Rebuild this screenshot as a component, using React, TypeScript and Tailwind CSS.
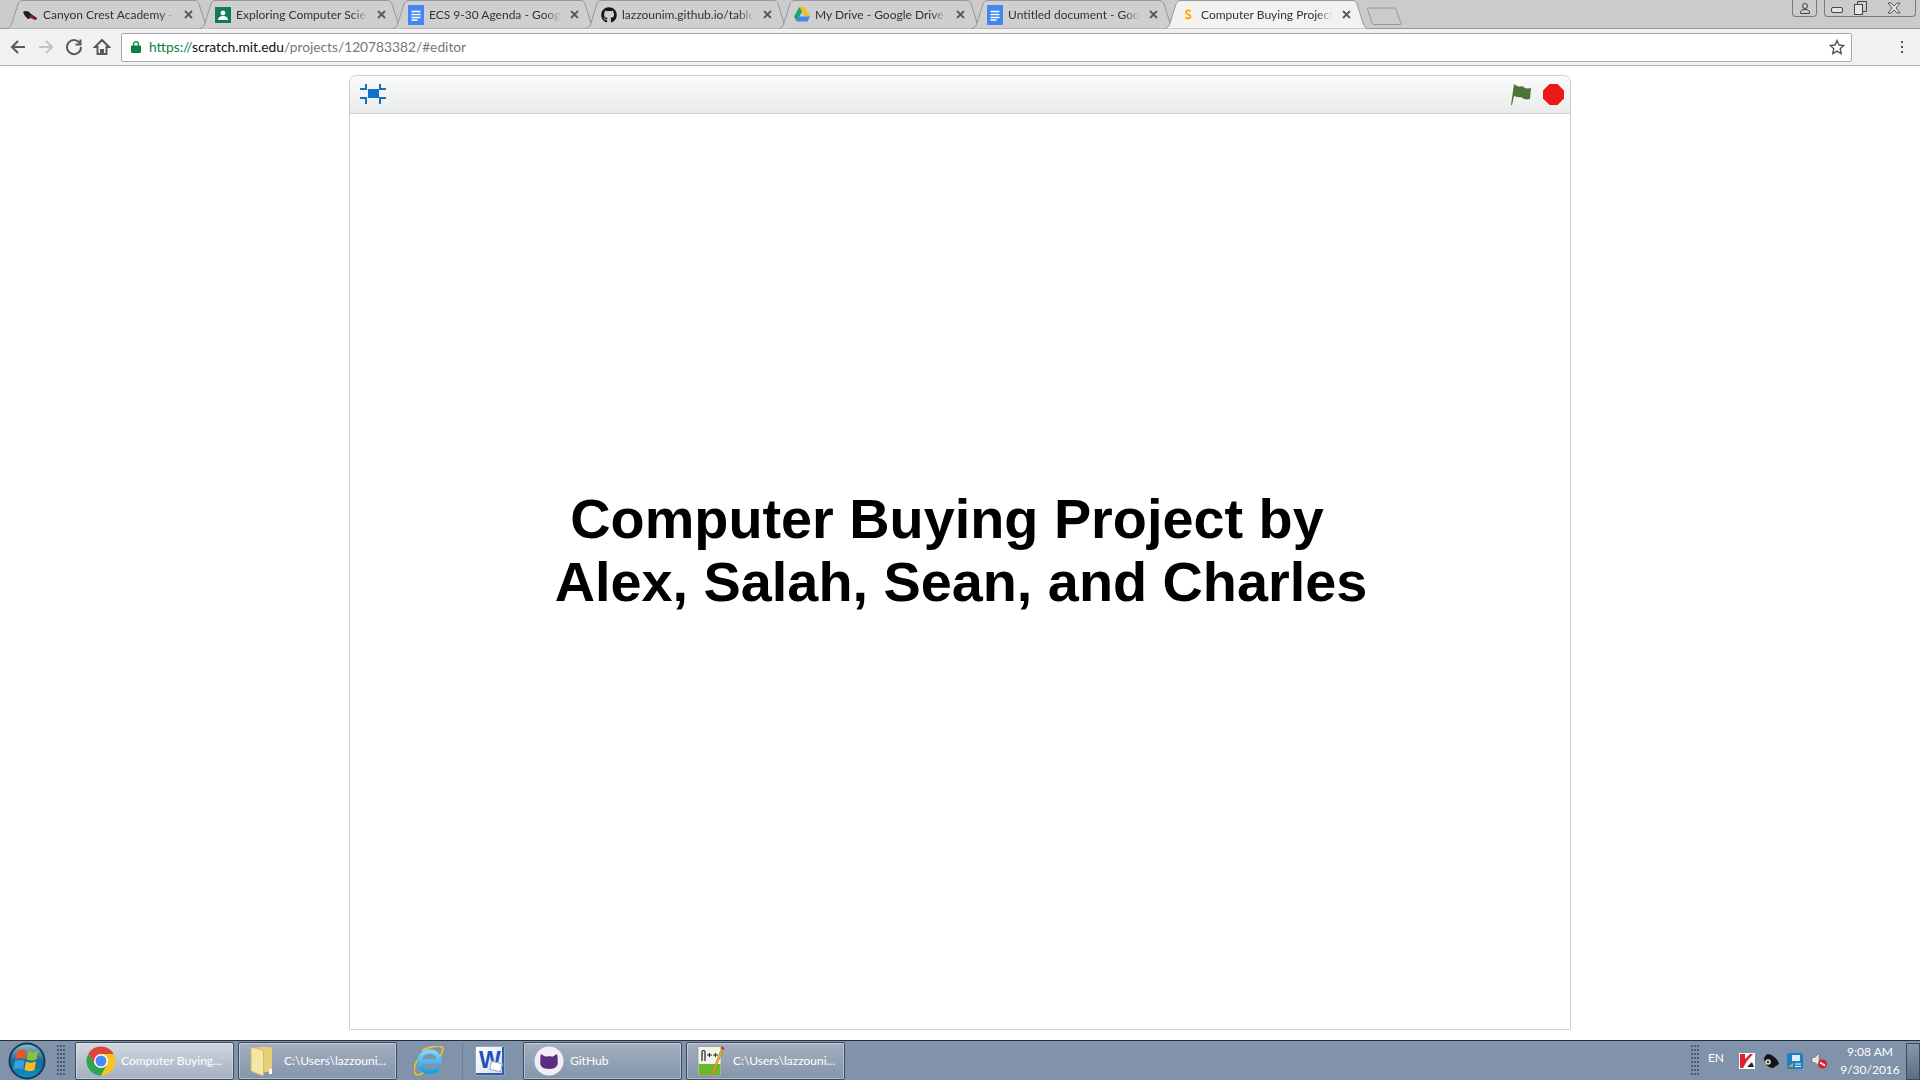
import React from 'react';
import { FaGithub } from 'react-icons/fa';

const uiFont = "font-['Lato','Open_Sans',sans-serif]";

const DocsIcon = () => (
  <svg width="16" height="20" viewBox="0 0 16 20">
    <rect width="16" height="20" rx="1" fill="#4285f4" />
    <path d="M3.500 6.500h9M3.500 9.500h9M3.500 12.500h9M3.500 15h6" stroke="#fff" strokeWidth="1.300" />
  </svg>
);

const tabs = [
  {
    title: 'Canyon Crest Academy -',
    icon: (
      <svg width="16" height="16" viewBox="0 0 16 16">
        <path d="M1 5c3-2 6-1 8 2l6 4-1 2-5-2-3 1-3-3z" fill="#1f1f1f" />
        <path d="M6 9l3-1 5 3-1 2-4-2z" fill="#8e1f26" />
      </svg>
    ),
  },
  {
    title: 'Exploring Computer Scie',
    icon: (
      <svg width="16" height="16" viewBox="0 0 16 16">
        <rect width="16" height="16" fill="#0f7a5c" />
        <circle cx="8" cy="6" r="2.400" fill="#fff" />
        <path d="M3 13c0-3 2.500-4 5-4s5 1 5 4z" fill="#fff" />
      </svg>
    ),
  },
  { title: 'ECS 9-30 Agenda - Goog', icon: <DocsIcon /> },
  { title: 'lazzounim.github.io/table', icon: <FaGithub size={16} color="#161614" /> },
  {
    title: 'My Drive - Google Drive',
    icon: (
      <svg width="16" height="15" viewBox="0 0 16 15">
        <path d="M5.500 0h5l5.500 9.500h-5z" fill="#f4c01e" />
        <path d="M5.500 0L8 4.700 2.700 14.500 0 9.500z" fill="#1ea362" />
        <path d="M5.300 9.500H16l-2.600 5H2.700z" fill="#4285f4" />
      </svg>
    ),
  },
  { title: 'Untitled document - Goo', icon: <DocsIcon /> },
  {
    title: 'Computer Buying Project',
    active: true,
    icon: (
      <svg width="12" height="16" viewBox="0 0 12 16">
        <rect x="1" y="0.500" width="10" height="15" rx="4" fill="#fff3dc" />
        <path d="M8.500 4.500C7.500 3 4 3 4 5.300c0 2.400 4.500 1.800 4.500 4.300 0 2.500-3.700 2.300-5 .8" fill="none" stroke="#f6a623" strokeWidth="1.800" />
      </svg>
    ),
  },
];

const TabShape = ({ active }: { active?: boolean }) => (
  <svg className="absolute inset-0" width="205" height="29" viewBox="0 0 205 29">
    <path
      d="M0.500 28.500 C4 28 5 26 6 23 L12 4 C13 1.500 14 0.500 17 0.500 H188 C191 0.500 192 1.500 193 4 L199 23 C200 26 201 28 204.500 28.500"
      fill={active ? '#f2f2f2' : '#cfcfcf'}
      stroke="#989898"
    />
  </svg>
);

const Tab = ({ title, icon, active }: { title: string; icon: React.ReactNode; active?: boolean }) => (
  <div className={`relative w-[205px] h-[29px] -mr-[12px] shrink-0 ${active ? 'z-10' : ''}`}>
    <TabShape active={active} />
    <div className="absolute inset-0 flex items-center pl-[16px]">
      <span className="w-[16px] h-[20px] flex items-center justify-center shrink-0">{icon}</span>
      <span className="ml-[5px] w-[132px] whitespace-nowrap text-[12px] leading-[16px] text-[#333] [mask-image:linear-gradient(to_right,black_88%,transparent)]">
        {title}
      </span>
      <svg className="ml-[9px]" width="9" height="9" viewBox="0 0 9 9">
        <path d="M1 1l7 7M8 1L1 8" stroke="#5a5a5a" strokeWidth="1.800" />
      </svg>
    </div>
  </div>
);

const NavIcon = ({ d, color = '#5a5a5a' }: { d: string; color?: string }) => (
  <svg width="18" height="18" viewBox="0 0 18 18" fill="none" stroke={color} strokeWidth="2">
    <path d={d} />
  </svg>
);

const Gripper = ({ className }: { className?: string }) => (
  <svg className={className} width="8" height="31" viewBox="0 0 8 31">
    {Array.from({ length: 24 }).map((_, i) => (
      <rect key={i} x={(i % 3) * 3} y={Math.floor(i / 3) * 4} width="2" height="2" fill="#3f4d5f" opacity="0.8" />
    ))}
  </svg>
);

const ChromeIcon = () => (
  <svg width="30" height="30" viewBox="0 0 30 30">
    <path d="M15 8H27.600A14.500 14.500 0 0 0 2.440 7.750L9 18.500 15 15z" fill="#db4437" />
    <path d="M2.440 7.750A14.500 14.500 0 0 0 15 29.500L21 18.500 15 15 9 18.500z" fill="#2fa44f" />
    <path d="M27.600 8A14.500 14.500 0 0 1 15 29.500L21 18.500 15 15V8z" fill="#f6c522" />
    <circle cx="15" cy="15" r="7" fill="#fff" />
    <circle cx="15" cy="15" r="5.500" fill="#4c8bf5" />
  </svg>
);

const FolderIcon = () => (
  <svg className="-ml-[4px]" width="24" height="32" viewBox="0 0 24 32">
    <path d="M7 2h13c1 0 2 1 2 2v23H7z" fill="#e8cf7c" />
    <path d="M1 2l11 3c1 .3 1.500 1 1.500 2v24L3 27c-1-.4-2-1-2-2z" fill="#f6e6a6" stroke="#cfae55" strokeWidth="0.700" />
    <rect x="19" y="24" width="3" height="5" fill="#fff" />
  </svg>
);

const IeIcon = () => (
  <svg width="30" height="30" viewBox="0 0 30 30" fill="none">
    <defs>
      <linearGradient id="ieBlue" x1="0" y1="0" x2="0" y2="1">
        <stop offset="0" stopColor="#7fd8f8" />
        <stop offset="1" stopColor="#1f9ae0" />
      </linearGradient>
    </defs>
    <path d="M8 4.500C16 0 25-1 28 1c2 2 0 6.500-2 9" stroke="#f0c232" strokeWidth="1.800" />
    <path d="M3 14C0 21-.5 26 1.500 28c2 1.500 5.500.5 8.500-2" stroke="#e9b92a" strokeWidth="1.800" />
    <path d="M6.500 15.500H25.500C25.500 9.500 21 5.500 16 5.500 10 5.500 5.500 10 5.500 15.500S10 26 16 26c4 0 7-2 8.500-5" stroke="url(#ieBlue)" strokeWidth="4.500" />
  </svg>
);

const WordIcon = () => (
  <div className="relative w-[28px] h-[28px] bg-gradient-to-br from-white to-[#d6e2f4] border-r-2 border-b-2 border-[#2e5ea8] shadow-[0_0_1px_#fff]">
    <span className="absolute left-[3px] top-[2px] text-[23px] leading-[23px] font-bold text-[#1f54b4] font-['Liberation_Sans',sans-serif]">W</span>
    <span className="absolute right-0 bottom-[2px] w-[12px] h-[9px] bg-white border border-[#8ea7cf] rotate-12" />
  </div>
);

const GithubDesktopIcon = () => (
  <svg width="30" height="30" viewBox="0 0 30 30">
    <circle cx="15" cy="15" r="14.500" fill="#f1eff4" />
    <path d="M7 8l4.500 2.800c2.200-.6 4.800-.6 7 0L23 8c.8 3 .8 5 .5 6.500 1 3.500 0 8.500-8.500 8.500S5.500 18 6.500 14.500C6.200 13 6.200 11 7 8z" fill="#5c2d82" />
  </svg>
);

const NotepadIcon = () => (
  <svg width="30" height="32" viewBox="0 0 30 32">
    <rect x="1" y="1.500" width="23" height="29" fill="#f2f5ee" stroke="#8a9a80" strokeWidth="0.700" />
    <path d="M1.500 19h22v11h-22z" fill="#6cb82b" />
    <path d="M5 16V7c0-2 3-2 3 0v9" fill="none" stroke="#222" strokeWidth="1.200" />
    <path d="M10 10h5M12.500 8v4M16 10h5M18.500 8v4" stroke="#222" strokeWidth="1" />
    <path d="M27 3L16 29l-1.500 1 .3-2L25 2z" fill="#f2b32d" stroke="#a96d10" strokeWidth="0.500" />
    <path d="M25 1.500l2.500 1.500-1 2-2.500-1.500z" fill="#a8324a" />
  </svg>
);

const WindowsOrb = () => (
  <svg width="38" height="38" viewBox="0 0 38 38">
    <defs>
      <linearGradient id="orbFill" x1="0" y1="0" x2="0" y2="1">
        <stop offset="0" stopColor="#8fb6cc" />
        <stop offset="0.500" stopColor="#1b6a92" />
        <stop offset="1" stopColor="#0f8fc0" />
      </linearGradient>
    </defs>
    <circle cx="19" cy="19" r="18.500" fill="#0f3c58" />
    <circle cx="19" cy="19" r="16.500" fill="url(#orbFill)" />
    <path d="M9 9c3-2 6-2 9.500-.5L17 17c-3-1.500-6-1.500-9.500 0z" fill="#e8552b" />
    <path d="M20 9c3 1.500 6 1.500 10 0l-1.500 8.500c-3 1.500-6 1.500-10 0z" fill="#8dbf3f" />
    <path d="M7 19c3-1.500 6-1.500 9.500 0L15 27.500c-3-1.500-6-1.500-9.500 0z" fill="#37a0e0" />
    <path d="M18 19.500c3 1.500 6 1.500 10 0l-1.500 8.500c-3 1.500-6 1.500-10 0z" fill="#f6bb26" />
  </svg>
);

const TaskButton = ({ icon, label, active, textLeft }: { icon: React.ReactNode; label: string; active?: boolean; textLeft: string }) => (
  <div
    className={`flex items-center w-[159px] h-[38px] shrink-0 pl-[10px] rounded-[2px] border border-[#3d4a5c] shadow-[inset_0_0_0_1px_rgba(255,255,255,0.35)] ${
      active ? 'bg-gradient-to-b from-[#d2d8df] to-[#a3afbf]' : 'bg-gradient-to-b from-[#a4afbf] to-[#8495ac]'
    }`}
  >
    <span className="w-[30px] h-[32px] flex items-center justify-center shrink-0">{icon}</span>
    <span className={`whitespace-nowrap text-[12px] text-white ${textLeft}`}>{label}</span>
  </div>
);

const TrayIcons = () => (
  <>
    <svg width="16" height="16" viewBox="0 0 16 16">
      <rect width="16" height="16" fill="#fff" />
      <path d="M1 1h5v5l5-5h3L8 8l-4 7H1z" fill="#e0202c" />
      <path d="M8 14l5-5 2 5z" fill="#222" />
    </svg>
    <svg width="16" height="16" viewBox="0 0 16 16">
      <path d="M4 1c5 0 11 5 12 10l-6 4C5 15 1 10 1 5z" fill="#141414" />
      <circle cx="5" cy="9" r="2.800" fill="#ddd" />
      <circle cx="5" cy="9" r="1.200" fill="#333" />
    </svg>
    <svg width="16" height="16" viewBox="0 0 16 16">
      <rect width="16" height="16" rx="2" fill="#1f7fc4" />
      <rect x="5" y="2" width="8" height="6" fill="#dcecf7" />
      <path d="M1 14l5-4v4z" fill="#e0a52a" />
      <path d="M8 11h6M8 13.500h6" stroke="#fff" strokeWidth="1.200" />
    </svg>
    <svg width="16" height="16" viewBox="0 0 16 16">
      <path d="M1 4.500h3L8 0v13L4 9.500H1z" fill="#e8e8e8" stroke="#555" strokeWidth="0.500" />
      <circle cx="11.500" cy="11" r="4.500" fill="#d8202a" />
      <path d="M9 9.500l5 3" stroke="#fff" strokeWidth="1.500" />
    </svg>
  </>
);

export default function App() {
  return (
    <div className={`h-screen w-full flex flex-col overflow-hidden bg-white ${uiFont}`}>
      {/* tab strip */}
      <div className="h-[29px] flex bg-[#cbcbcb] border-b border-[#989898] pl-[6px] shrink-0">
        {tabs.map((tab) => (
          <Tab key={tab.title} title={tab.title} icon={tab.icon} active={tab.active} />
        ))}
        <svg className="ml-[10px] mt-[7px] shrink-0 -mr-[1px]" width="35" height="18" viewBox="0 0 35 18">
          <path d="M1 1h26c1 0 1.500.5 2 1.500L34 16c.2 1 0 1.500-1 1.500H7c-1 0-1.500-.5-2-1.500L.5 2C.2 1 .3 1 1 1z" fill="#cbcbcb" stroke="#989898" />
        </svg>
        <div className="ml-auto flex items-start h-[17px] relative z-10">
          <div className="w-[25px] h-[17px] border border-t-0 border-[#7a7a7a] rounded-b-[4px] flex items-center justify-center">
            <svg width="12" height="12" viewBox="0 0 12 12" fill="none" stroke="#444">
              <circle cx="6" cy="4" r="2.500" />
              <path d="M1.500 11.500v-2L4 7.500h4l2.500 2v2z" />
            </svg>
          </div>
          <div className="ml-[7px] mr-[4px] w-[92px] h-[17px] border border-t-0 border-[#7a7a7a] rounded-b-[4px] flex items-center">
            <div className="w-[23px] flex justify-center">
              <span className="block mt-[3px] w-[12px] h-[6px] border border-[#444] rounded-[2px] bg-[#e5e5e5]" />
            </div>
            <svg className="ml-[6px]" width="13" height="14" viewBox="0 0 13 14" fill="none" stroke="#444">
              <rect x="0.500" y="3.500" width="8" height="10" fill="#e5e5e5" />
              <path d="M3.500 3V.5h9v10H9" />
            </svg>
            <svg className="ml-[20px]" width="14" height="12" viewBox="0 0 14 12" fill="#e5e5e5" stroke="#555">
              <path d="M1 1h3l3 3 3-3h3L9 6l4 5h-3L7 8l-3 3H1l4-5z" />
            </svg>
          </div>
        </div>
      </div>

      {/* toolbar */}
      <div className="h-[37px] flex items-center bg-[#f2f2f2] border-b border-[#b5b5b5] shrink-0">
        <div className="flex items-center w-[121px] shrink-0 pl-[9px]">
          <NavIcon d="M16 9H3M9 3L3 9l6 6" />
          <span className="ml-[10px]">
            <NavIcon d="M2 9h13M9 3l6 6-6 6" color="#c4c4c4" />
          </span>
          <span className="ml-[10px]">
            <NavIcon d="M15 5.500A7 7 0 1 0 16 9M15.500 1.500v5h-5" />
          </span>
          <span className="ml-[10px]">
            <NavIcon d="M9 2L2 9h2.500v7h9V9H16zM8 16v-4h2v4" />
          </span>
        </div>
        <div className="w-[1731px] h-[29px] bg-white border border-[#a9a9a9] rounded-[2px] flex items-center shrink-0">
          <svg className="ml-[9px]" width="10" height="12" viewBox="0 0 10 12">
            <rect y="4.500" width="10" height="7.500" rx="1" fill="#0b8043" />
            <path d="M2.500 5V3.200a2.500 2.500 0 0 1 5 0V5" fill="none" stroke="#0b8043" strokeWidth="1.300" />
          </svg>
          <span className="ml-[8px] text-[13.75px] leading-[18px] text-[#777]">
            <span className="text-[#0b8043]">https://</span>
            <span className="text-[#111]">scratch.mit.edu</span>/projects/120783382/#editor
          </span>
          <svg className="ml-auto mr-[6px]" width="16" height="16" viewBox="0 0 16 16" fill="none" stroke="#555" strokeWidth="1.400">
            <path d="M8 1.500l2 4.500 4.800.5-3.600 3.200 1 4.800L8 12.100l-4.200 2.400 1-4.800L1.200 6.500 6 6z" />
          </svg>
        </div>
        <div className="flex flex-col gap-[3px] ml-[49px]">
          <span className="w-[2px] h-[2px] bg-[#555]" />
          <span className="w-[2px] h-[2px] bg-[#555]" />
          <span className="w-[2px] h-[2px] bg-[#555]" />
        </div>
      </div>

      {/* scratch stage */}
      <div className="flex-1 min-h-0 pt-[9px] pb-[10px] flex justify-center bg-white">
        <div className="w-[1222px] h-full flex flex-col border border-[#d0d0d0] rounded-t-[7px] shrink-0">
          <div className="h-[38px] flex items-center bg-gradient-to-b from-[#fbfbfb] to-[#e9ebeb] border-b border-[#d0d0d0] rounded-t-[7px] shrink-0">
            <svg className="ml-[10px] -mt-[2px]" width="26" height="20" viewBox="0 0 26 20" fill="none" stroke="#1273bf" strokeWidth="2">
              <rect x="8" y="5" width="11" height="9" fill="#0f72c4" stroke="none" />
              <path d="M0 5h6V0M26 5h-6V0M0 14h6v6M26 14h-6v6" />
            </svg>
            <svg className="ml-auto -mt-[1px]" width="22" height="22" viewBox="0 0 22 22">
              <path d="M1 22L4 1c4 3 6 3 8 2 2 2 5 3 9 2l-1 11c-4 1-7 0-9-2-2 .5-5 0-7-1L2 22z" fill="#4b7436" />
            </svg>
            <svg className="ml-[11px] mr-[6px]" width="21" height="21" viewBox="0 0 21 21">
              <path d="M6.500 0h8L21 6.500v8L14.500 21h-8L0 14.500v-8z" fill="#ec1717" />
            </svg>
          </div>
          <div className="flex-1 min-h-0 flex flex-col items-center pt-[373px] font-['Liberation_Sans',Arial,sans-serif] font-bold text-black text-[55.8px] leading-[63px]">
            <div className="pr-[26px] whitespace-nowrap">Computer Buying Project by</div>
            <div className="pl-[2px] whitespace-nowrap">Alex, Salah, Sean, and Charles</div>
          </div>
        </div>
      </div>

      {/* windows taskbar */}
      <div className="h-[40px] flex items-center bg-[#8193ab] border-t border-[#22303f] shrink-0">
        <div className="ml-[8px] shrink-0"><WindowsOrb /></div>
        <Gripper className="ml-[11px] mr-[10px] shrink-0" />
        <TaskButton active icon={<ChromeIcon />} label="Computer Buying..." textLeft="ml-[5px]" />
        <div className="ml-[4px]">
          <TaskButton icon={<FolderIcon />} label="C:\Users\lazzouni..." textLeft="ml-[5px]" />
        </div>
        <div className="ml-[17px] shrink-0"><IeIcon /></div>
        <div className="ml-[18px] w-px h-[36px] bg-[#6f7f95] shrink-0" />
        <div className="ml-[13px] shrink-0"><WordIcon /></div>
        <div className="ml-[19px]">
          <TaskButton icon={<GithubDesktopIcon />} label="GitHub" textLeft="ml-[6px]" />
        </div>
        <div className="ml-[4px]">
          <TaskButton icon={<NotepadIcon />} label="C:\Users\lazzouni..." textLeft="ml-[6px]" />
        </div>
        <Gripper className="ml-auto shrink-0" />
        <span className="ml-[9px] -mt-[5px] text-[12px] text-white">EN</span>
        <div className="ml-[15px] flex items-center gap-[8px] shrink-0">
          <TrayIcons />
        </div>
        <div className="ml-[10px] w-[66px] flex flex-col items-center text-[12px] leading-[18px] text-white shrink-0">
          <span>9:08 AM</span>
          <span>9/30/2016</span>
        </div>
        <div className="ml-[3px] w-[14px] h-[37px] self-end bg-gradient-to-b from-[#8898ac] to-[#5d6c80] border border-[#3c4a5a] shrink-0" />
      </div>
    </div>
  );
}
